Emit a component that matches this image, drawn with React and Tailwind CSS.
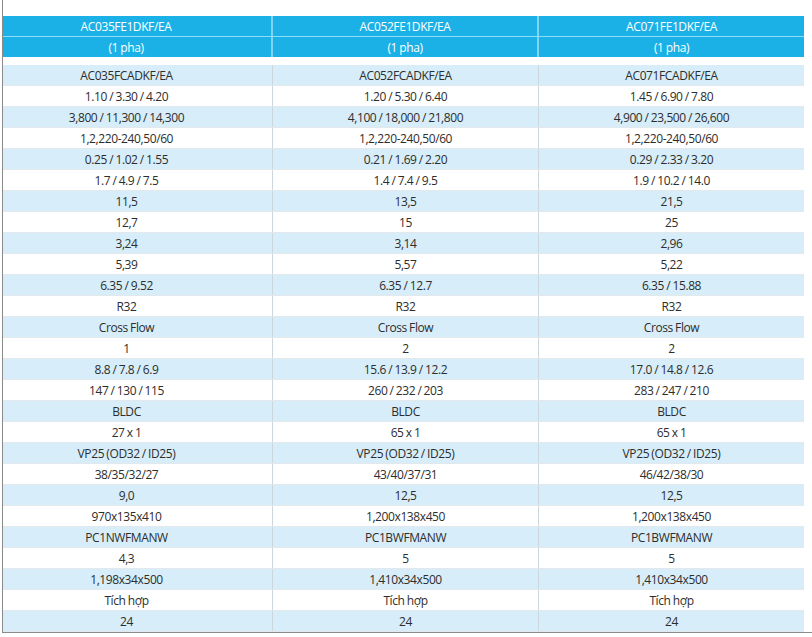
import React from "react";

const rows = [
  ["AC035FCADKF/EA", "AC052FCADKF/EA", "AC071FCADKF/EA"],
  ["1.10 / 3.30 / 4.20", "1.20 / 5.30 / 6.40", "1.45 / 6.90 / 7.80"],
  ["3,800 / 11,300 / 14,300", "4,100 / 18,000 / 21,800", "4,900 / 23,500 / 26,600"],
  ["1,2,220-240,50/60", "1,2,220-240,50/60", "1,2,220-240,50/60"],
  ["0.25 / 1.02 / 1.55", "0.21 / 1.69 / 2.20", "0.29 / 2.33 / 3.20"],
  ["1.7 / 4.9 / 7.5", "1.4 / 7.4 / 9.5", "1.9 / 10.2 / 14.0"],
  ["11,5", "13,5", "21,5"],
  ["12,7", "15", "25"],
  ["3,24", "3,14", "2,96"],
  ["5,39", "5,57", "5,22"],
  ["6.35 / 9.52", "6.35 / 12.7", "6.35 / 15.88"],
  ["R32", "R32", "R32"],
  ["Cross Flow", "Cross Flow", "Cross Flow"],
  ["1", "2", "2"],
  ["8.8 / 7.8 / 6.9", "15.6 / 13.9 / 12.2", "17.0 / 14.8 / 12.6"],
  ["147 / 130 / 115", "260 / 232 / 203", "283 / 247 / 210"],
  ["BLDC", "BLDC", "BLDC"],
  ["27 x 1", "65 x 1", "65 x 1"],
  ["VP25 (OD32 / ID25)", "VP25 (OD32 / ID25)", "VP25 (OD32 / ID25)"],
  ["38/35/32/27", "43/40/37/31", "46/42/38/30"],
  ["9,0", "12,5", "12,5"],
  ["970x135x410", "1,200x138x450", "1,200x138x450"],
  ["PC1NWFMANW", "PC1BWFMANW", "PC1BWFMANW"],
  ["4,3", "5", "5"],
  ["1,198x34x500", "1,410x34x500", "1,410x34x500"],
  ["Tích hợp", "Tích hợp", "Tích hợp"],
  ["24", "24", "24"],
];

const headers = [
  ["AC035FE1DKF/EA", "AC052FE1DKF/EA", "AC071FE1DKF/EA"],
  ["(1 pha)", "(1 pha)", "(1 pha)"],
];

export default function App() {
  return (
    <div className="w-[812px] h-[637px] bg-white font-['Open_Sans','Noto_Sans',sans-serif] text-[12px] leading-none tracking-[-0.4px] [word-spacing:-0.5px]">
      <div className="ml-[2px] w-[810px] h-[633px] border-l border-b border-[#8a8a8a] pt-[16px]">
        <div className="w-[801px]">
          {headers.map((h, i) => (
            <div
              key={i}
              className={`grid grid-cols-[270px_266px_265px] bg-[#1bb1e7] text-white ${
                i === 0 ? "h-[21px] border-b border-[#8fdcf6]" : "h-[20px]"
              }`}
            >
              <div className="flex items-center justify-center pt-[1px] pr-[22px] border-r-2 border-[#7fd5f3]">{h[0]}</div>
              <div className="flex items-center justify-center pt-[1px] border-r-2 border-[#7fd5f3]">{h[1]}</div>
              <div className="flex items-center justify-center pt-[1px]">{h[2]}</div>
            </div>
          ))}
          <div className="h-[8px]" />
          {rows.map((r, i) => (
            <div
              key={i}
              className={`grid grid-cols-[270px_266px_265px] h-[21px] text-[#2d2d2d] border-b border-[#e3e8ec] ${
                i % 2 === 0 ? "bg-[#d7edf9]" : "bg-white"
              }`}
            >
              <div className="flex items-center justify-center pt-[2px] pr-[22px] border-r border-[#cdd6dc]">{r[0]}</div>
              <div className="flex items-center justify-center pt-[2px] border-r border-[#cdd6dc]">{r[1]}</div>
              <div className="flex items-center justify-center pt-[2px]">{r[2]}</div>
            </div>
          ))}
        </div>
      </div>
    </div>
  );
}
